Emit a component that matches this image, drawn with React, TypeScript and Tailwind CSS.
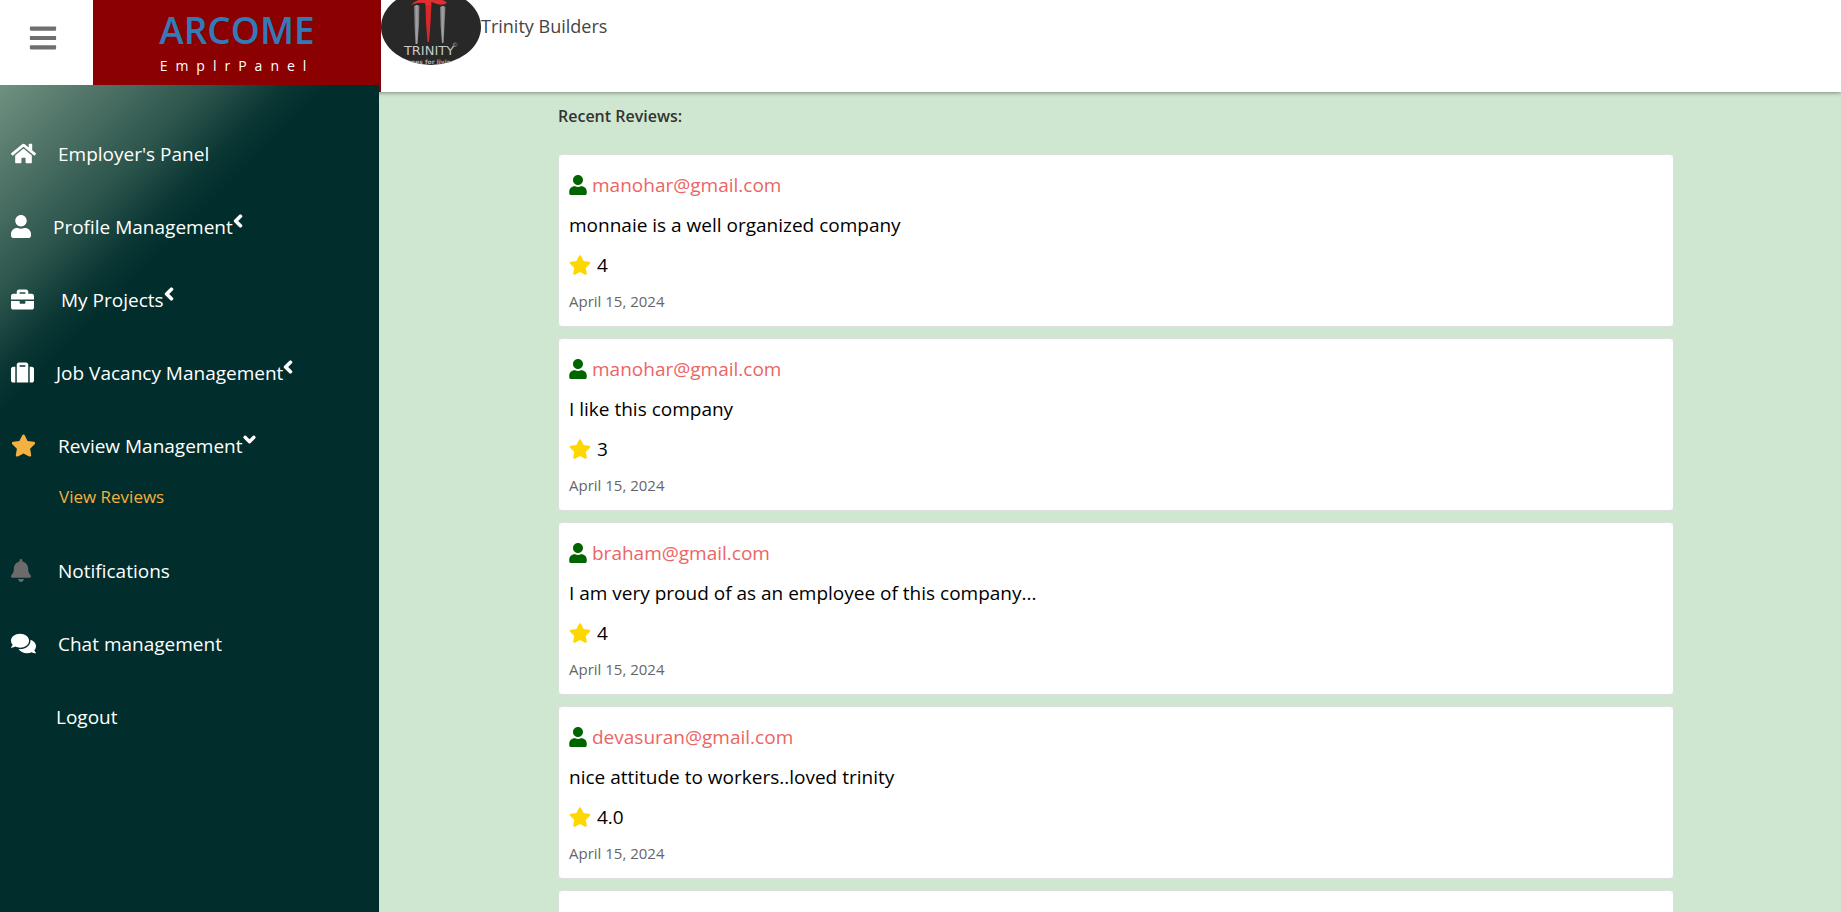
import { FaHome, FaUser, FaBriefcase, FaSuitcase, FaStar, FaBell, FaComments, FaBars, FaChevronLeft, FaChevronDown } from "react-icons/fa";
import type { IconType } from "react-icons";

type NavItem = {
  label: string;
  icon?: IconType;
  iconClass?: string;
  labelClass: string;
  caret?: "left" | "down";
  children?: string[];
};

const navItems: NavItem[] = [
  { label: "Employer's Panel", icon: FaHome, iconClass: "size-[25px]", labelClass: "pl-[47px]" },
  { label: "Profile Management", icon: FaUser, iconClass: "h-[23px] w-5", labelClass: "pl-[42px]", caret: "left" },
  { label: "My Projects", icon: FaBriefcase, iconClass: "size-[23px]", labelClass: "pl-[50px]", caret: "left" },
  { label: "Job Vacancy Management", icon: FaSuitcase, iconClass: "size-[23px]", labelClass: "pl-[45px]", caret: "left" },
  { label: "Review Management", icon: FaStar, iconClass: "size-[25px] text-[#f3b13f]", labelClass: "pl-[47px]", caret: "down", children: ["View Reviews"] },
  { label: "Notifications", icon: FaBell, iconClass: "h-[23px] w-5 text-[#6b6b6b]", labelClass: "pl-[47px]" },
  { label: "Chat management", icon: FaComments, iconClass: "size-[25px]", labelClass: "pl-[47px]" },
  { label: "Logout", labelClass: "pl-[45px]" },
];

const reviews = [
  { email: "manohar@gmail.com", text: "monnaie is a well organized company", rating: "4", date: "April 15, 2024" },
  { email: "manohar@gmail.com", text: "I like this company", rating: "3", date: "April 15, 2024" },
  { email: "braham@gmail.com", text: "I am very proud of as an employee of this company...", rating: "4", date: "April 15, 2024" },
  { email: "devasuran@gmail.com", text: "nice attitude to workers..loved trinity", rating: "4.0", date: "April 15, 2024" },
];

function CompanyLogo() {
  return (
    <svg viewBox="0 0 100 76" className="h-[76px] w-[100px] shrink-0" role="img" aria-label="Trinity">
      <defs>
        <clipPath id="logo-clip">
          <ellipse cx="50" cy="38" rx="50" ry="38" />
        </clipPath>
        <linearGradient id="pillar" x1="0" x2="1" y1="0" y2="0">
          <stop offset="0" stopColor="#6d6f70" />
          <stop offset="0.5" stopColor="#a4a6a7" />
          <stop offset="1" stopColor="#6d6f70" />
        </linearGradient>
      </defs>
      <g clipPath="url(#logo-clip)">
        <rect width="100" height="76" fill="#282828" />
        <path d="M33 17 Q36 15 38.500 17 L38 36 L36.500 55 L34.500 55 L33.500 36 Z" fill="url(#pillar)" />
        <path d="M59 18 Q62 16 64.500 18 L63.500 36 L62.500 54 L61 54 L59.500 36 Z" fill="url(#pillar)" />
        <path d="M44.500 15 L50.500 15 L49.500 34 L48 53 L46.500 53 L45 34 Z" fill="#d7282c" />
        <path d="M30 16 Q34 11 42 10 L45 0 L49 0 L51 10 L57 10 Q64 11 66 14 Q62 17 56 15 L50.500 13 L50 16 L44.500 16 L44 14 Q37 13 30 16 Z" fill="#e22d31" />
        <text x="48" y="66" textAnchor="middle" fontSize="13" fill="#c9c9c9" className="font-['DejaVu_Sans',sans-serif]">TRINITY</text>
        <text x="74" y="58" textAnchor="middle" fontSize="6" fill="#b0b0b0" className="font-['DejaVu_Sans',sans-serif]">©</text>
        <text x="47" y="75" textAnchor="middle" fontSize="6" fontWeight="700" fill="#a8a8a8" className="font-['DejaVu_Sans',sans-serif]">homes for living</text>
      </g>
    </svg>
  );
}

export default function App() {
  return (
    <div className="h-screen overflow-hidden bg-[#cfe7d1] font-['Open_Sans','Noto_Sans',sans-serif] text-[19px] leading-[30px] text-black">
      <header className="relative flex h-[92px] bg-white shadow-[0_1px_4px_rgba(0,0,0,0.4)]">
        <button type="button" aria-label="Toggle menu" className="flex h-[75px] w-[93px] shrink-0 items-center pl-[29px] text-[#6f6f6f]">
          <FaBars className="h-[30px] w-7" />
        </button>
        <div className="flex w-72 shrink-0 flex-col items-center bg-[#8b0000] pt-[7px]">
          <a href="#" className="text-[37px] leading-[46px] font-semibold text-[#337ab7]">ARCOME</a>
          <span className="text-[14px] leading-[26px] tracking-[8px] text-white">EmplrPanel</span>
        </div>
        <div className="flex items-start">
          <div className="-mt-[11px]"><CompanyLogo /></div>
          <span className="pt-[11px] text-[18px] text-[#444]">Trinity Builders</span>
        </div>
      </header>

      <div className="relative flex h-full items-start">
        <nav className="-mt-[7px] h-full w-[379px] shrink-0 bg-[linear-gradient(135deg,#6f9181_0px,#4a6e62_85px,#2b544c_150px,#093532_205px,#012d2c_235px)] pt-8 text-white">
          <ul>
            {navItems.map((item) => (
              <li key={item.label}>
                <a href="#" className="flex h-[73px] items-center pl-[11px]">
                  <span className="w-0">
                    {item.icon && <item.icon className={item.iconClass} />}
                  </span>
                  <span className={item.labelClass}>{item.label}</span>
                  {item.caret === "left" && <FaChevronLeft className="mb-3 h-3.5 w-2.5 stroke-current stroke-[50px]" />}
                  {item.caret === "down" && <FaChevronDown className="mb-3 size-[13px] stroke-current stroke-[50px]" />}
                </a>
                {item.children?.map((child) => (
                  <a key={child} href="#" className="mb-[22px] block pl-[59px] text-[17px]/[30px] text-[#f3b13f]">{child}</a>
                ))}
              </li>
            ))}
          </ul>
        </nav>

        <main className="min-w-0 flex-1 pt-[9px] pr-[167px] pl-[179px]">
          <h1 className="text-[16px] font-semibold text-[#333]">Recent Reviews:</h1>
          <ul className="mt-[23px] flex flex-col gap-[11px]">
            {reviews.map((review, index) => (
              <li key={index} className="h-[173px] rounded border border-[#dcdfdc] bg-white px-2.5 pt-[15px]">
                <div className="flex items-center gap-[5px] text-[#eb6565]">
                  <FaUser className="h-5 w-[18px] text-[#006400]" />
                  {review.email}
                </div>
                <p className="mt-2.5">{review.text}</p>
                <p className="mt-2.5 flex items-center gap-1.5">
                  <FaStar className="size-[22px] text-[#ffd700]" />
                  {review.rating}
                </p>
                <p className="mt-1.5 text-[15px] text-[#666]">{review.date}</p>
              </li>
            ))}
            <li className="h-[173px] rounded border border-[#dcdfdc] bg-white" />
          </ul>
        </main>
      </div>
    </div>
  );
}
